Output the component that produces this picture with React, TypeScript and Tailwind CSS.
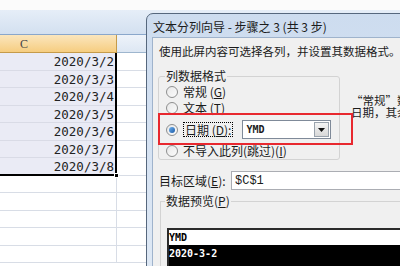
import React from 'react';

const dates = ['2020/3/2', '2020/3/3', '2020/3/4', '2020/3/5', '2020/3/6', '2020/3/7', '2020/3/8'];

const Radio = ({ checked }: { checked?: boolean }) => (
	<span className="ml-[7px] mr-[5px] flex h-[12px] w-[12px] shrink-0 items-center justify-center rounded-full border border-[#8e8f8f] bg-gradient-to-br from-[#e8e8e8] to-[#fbfbfb]">
		{checked && <span className="h-[6px] w-[6px] rounded-full bg-gradient-to-br from-[#6fb3f0] to-[#1b5aa6]" />}
	</span>
);

const Sheet = () => (
	<div className="flex flex-col">
		<div className="h-[10px] bg-[#fbfbfb]" />
		<div className="h-[25px] border-b border-[#8aa7cb] bg-gradient-to-b from-[#e6eef8] to-[#d3e0f0]" />
		<div className="flex">
			<div className="flex w-[117px] flex-col">
				<div className="h-[18px] border-b border-r border-[#c59b4a] bg-gradient-to-b from-[#fbe6bd] to-[#f6cd80] pl-[20px] font-['Liberation_Serif',serif] text-[12px] leading-[18px] text-[#444]">
					C
				</div>
				<div className="relative border-b-2 border-r-2 border-black bg-[#eaebf5]">
					{dates.map((d, i) => (
						<div
							key={d}
							className={`${i < 6 ? 'h-[17.5px] border-b border-[#d9dbe6]' : 'h-[15.5px]'} pr-[1px] text-right font-['DejaVu_Sans_Mono',monospace] text-[12.5px] leading-[17px] text-[#222]`}
						>
							{d}
						</div>
					))}
					<span className="absolute -bottom-[4px] -right-[4px] h-[5px] w-[5px] border border-white bg-black" />
				</div>
				{[0, 1, 2, 3, 4].map((i) => (
					<div key={i} className="h-[17.5px] border-b border-r border-[#d8dde6] bg-white" />
				))}
			</div>
			<div className="flex flex-1 flex-col">
				<div className="h-[18px] border-b border-[#9eb6ce] bg-gradient-to-b from-[#eef3fa] to-[#dde7f3]" />
				{Array.from({ length: 12 }).map((_, i) => (
					<div key={i} className="h-[17.5px] border-b border-[#d8dde6] bg-white" />
				))}
			</div>
		</div>
	</div>
);

const Dialog = () => (
	<div className="absolute left-[146px] top-[13px] flex h-[270px] w-[270px] flex-col rounded-tl-[7px] border border-[#56677d] bg-gradient-to-b from-[#cddcef] to-[#dfe9f5] font-['Noto_Sans_CJK_SC',sans-serif] text-[#1b1b1b]">
		<div className="flex h-[23px] items-center pl-[6px] pt-[3px] text-[12px]">文本分列向导 - 步骤之 3 (共 3 步)</div>
		<div className="ml-[5px] flex flex-1 flex-col border-l border-t border-[#9fb3cc] bg-[#f0f0f0] text-[12px]">
			<p className="mt-[5px] whitespace-nowrap pl-[6px] text-[11.5px] leading-[16px]">使用此屏内容可选择各列，并设置其数据格式。</p>
			<div className="mt-[9px] flex items-start">
				<fieldset className="ml-[5px] h-[92px] w-[182px] shrink-0 rounded-[3px] border border-[#d3d3d3]">
					<legend className="ml-[6px] px-[1px] leading-[16px]">列数据格式</legend>
					<div className="flex h-[16px] items-center">
						<Radio />
						<span>
							常规 (<span className="underline">G</span>)
						</span>
					</div>
					<div className="flex h-[16px] items-center">
						<Radio />
						<span>
							文本 (<span className="underline">T</span>)
						</span>
					</div>
					<div className="relative flex h-[27px] items-center">
						<Radio checked />
						<span className="border border-dotted border-black px-[1px] leading-[13px]">
							日期 (<span className="underline">D</span>):
						</span>
						<div className="ml-[9px] flex h-[19px] w-[89px] shrink-0 items-center border border-[#7f8a99] bg-white">
							<span className="flex-1 pl-[3px] font-['DejaVu_Sans_Mono',monospace] text-[10px] font-bold">YMD</span>
							<span className="mr-[1px] flex h-[15px] w-[15px] items-center justify-center border border-[#9aa3ad] bg-gradient-to-b from-[#f4f4f4] to-[#d8d8d8]">
								<svg width="7" height="4" viewBox="0 0 7 4">
									<path d="M0 0h7L3.5 4z" fill="#111" />
								</svg>
							</span>
						</div>
						<span className="pointer-events-none absolute -left-[1px] -top-[3px] h-[32px] w-[195px] border-2 border-[#e8282f]" />
					</div>
					<div className="flex h-[16px] items-center whitespace-nowrap">
						<Radio />
						<span>
							不导入此列(跳过)(<span className="underline">I</span>)
						</span>
					</div>
				</fieldset>
				<p className="ml-[11px] mt-[26px] whitespace-nowrap text-[11.5px] leading-[12px]">
					“常规”数据
					<br />
					日期，其余
				</p>
			</div>
			<div className="mt-[11px] flex h-[19px] items-center">
				<span className="w-[78px] shrink-0 pl-[6px]">
					目标区域(<span className="underline">E</span>):
				</span>
				<div className="flex h-[19px] flex-1 items-center border border-[#abadb3] bg-white pl-[3px] font-['Liberation_Mono',monospace] text-[12px]">
					$C$1
				</div>
			</div>
			<fieldset className="ml-[7px] mt-[3px] flex-1 border border-[#d3d3d3]">
				<legend className="ml-[4px] px-[1px] leading-[16px]">
					数据预览(<span className="underline">P</span>)
				</legend>
				<div className="ml-[6px] mt-[19px] border-l-2 border-t-2 border-[#2b2b2b] font-['DejaVu_Sans_Mono',monospace] text-[10px] font-bold leading-[15px]">
					<div className="h-[15px] bg-white text-black">YMD</div>
					<div className="h-[17px] bg-black leading-[17px] text-white">2020-3-2</div>
					<div className="h-[17px] bg-black leading-[17px] text-white">2020-3-3</div>
				</div>
			</fieldset>
		</div>
	</div>
);

export default function App() {
	return (
		<div className="relative h-[266px] w-[400px] overflow-hidden bg-white">
			<Sheet />
			<Dialog />
		</div>
	);
}
